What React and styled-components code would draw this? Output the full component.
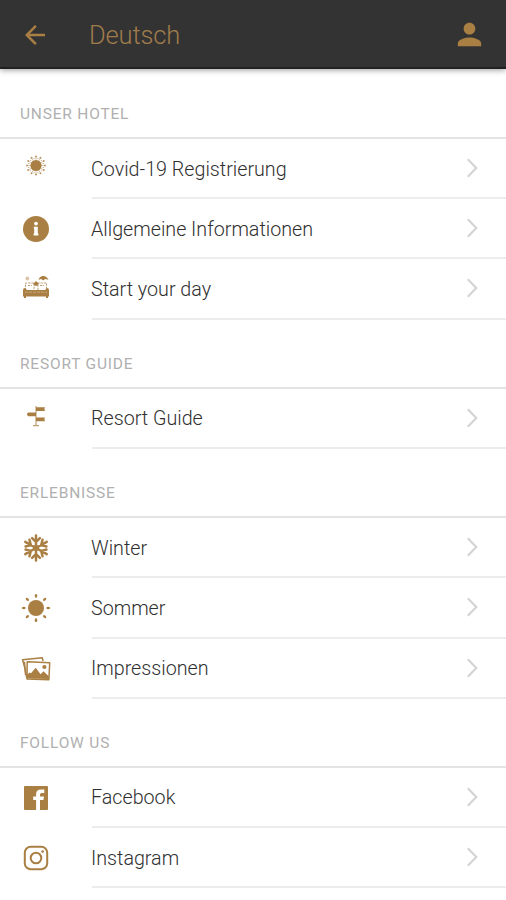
import React from "react";
import styled, { ThemeProvider, createGlobalStyle } from "styled-components";
import { MdArrowBack, MdPerson } from "react-icons/md";

const GlobalStyle = createGlobalStyle`
    * {
        box-sizing: border-box;
    }

    body {
        margin: 0;
        background: #fff;
        font-family: Roboto, "Liberation Sans", sans-serif;
        overflow: hidden;
    }
`;

const Screen = styled.div`
    width: 100%;
    height: 900px;
    overflow: hidden;
    background: #fff;
`;

const AppBar = styled.header`
    display: flex;
    align-items: center;
    height: 69px;
    padding: 2px 19px 0 20px;
    background: #333;
    border-bottom: 2px solid #212121;
    box-shadow: 0 1px 6px rgba(0, 0, 0, 0.4);
    color: ${({ theme }) => theme.gold};

    svg {
        display: block;
        flex: none;
    }
`;

const Title = styled.h1`
    flex: 1;
    margin: 1px 0 0 39px;
    font-size: 25.5px;
    font-weight: 300;
    line-height: 32px;
    letter-spacing: -0.15px;
    color: #a07c4b;
`;

const SectionTitle = styled.h2`
    display: flex;
    align-items: flex-end;
    height: ${({ $first }) => ($first ? 70 : 69.2)}px;
    margin: 0;
    padding: 0 20px 13px;
    border-bottom: 2px solid #e4e4e4;
    font-size: 15.5px;
    font-weight: 400;
    line-height: 20px;
    letter-spacing: 0.8px;
    color: #b0b0b0;
`;

const Row = styled.div`
    display: flex;
    height: 60.2px;
`;

const IconCell = styled.div`
    display: flex;
    flex: none;
    align-items: center;
    justify-content: center;
    width: 72px;
    margin-right: 19.5px;
    color: ${({ theme }) => theme.gold};

    svg {
        display: block;
    }
`;

const RowBody = styled.div`
    display: flex;
    flex: 1;
    align-items: center;
    justify-content: space-between;
    padding-right: 27px;
    border-bottom: 2px solid #ececec;
`;

const Label = styled.span`
    padding-top: 3px;
    margin-left: -0.5px;
    font-size: 19.7px;
    font-weight: 300;
    line-height: 26px;
    color: #303030;
    white-space: nowrap;
`;

const IconSvg = ({ children }) => (
    <svg width="30" height="30" viewBox="-15 -15 30 30" fill="currentColor">
        {children}
    </svg>
);

const steps = (count) => Array.from({ length: count }, (_, i) => (360 / count) * i);

const VirusIcon = () => (
    <IconSvg>
        <g transform="translate(0 -3.5)">
            <circle r="5.6" />
            {steps(12).map((a) => (
                <g key={a} transform={`rotate(${a})`} opacity="0.85">
                    <path d="M0-5V-9" stroke="currentColor" strokeWidth="0.5" />
                    <circle cy="-9" r="0.95" />
                </g>
            ))}
            {steps(12).map((a) => (
                <circle key={a} r="0.5" cy="-7.4" transform={`rotate(${a + 15})`} />
            ))}
        </g>
    </IconSvg>
);

const InfoIcon = () => (
    <IconSvg>
        <circle r="13" />
        <circle cy="-5.4" r="1.9" fill="#fff" />
        <path d="M-2.2-2.2H1.8V4.6H2.4V6.4H-2.4V4.6H-1.8V-.4H-2.2Z" fill="#fff" />
    </IconSvg>
);

const BedIcon = () => (
    <IconSvg>
        <g transform="translate(0 -2)">
            <circle cx="-8.6" cy="-8.5" r="1.9" opacity="0.45" />
            <path d="M2.5-7.3Q4-11 7-11Q10-11.5 12.5-7.3L9-8Q7-5.5 5.5-8Z" />
            <path
                d="M-10.5 3V-4H-2V3M2 3V-4H10.5V3M-8-1.5H-4M4-1.5H8"
                fill="none"
                stroke="currentColor"
                strokeWidth="1"
                strokeDasharray="2.2 1"
                opacity="0.75"
            />
            <path d="M0-6L2.8-3.2L1.3-1.2H-1.3L-2.8-3.2Z" />
            <path d="M-13 3Q-13 1-11 1L-9 3H9L11 1Q13 1 13 3V9.5H12V11H10V9.5H-10V11H-12V9.5H-13Z" />
            <path d="M-11 5.2H11" stroke="#fff" strokeWidth="0.6" strokeDasharray="3 1" opacity="0.5" />
        </g>
    </IconSvg>
);

const SignpostIcon = () => (
    <IconSvg>
        <g transform="translate(0 -2)">
            <path d="M-.6-11H.6V8H3V9.3H-3V8H-.6Z" opacity="0.75" />
            <path d="M0-9.8H9L8.4-8L9-6H0Z" />
            <path d="M0-4.6H-8L-9.2-2.7L-8-.8H0Z" />
            <path d="M0 .4H9L8.4 2.3L9 4.2H0Z" />
        </g>
    </IconSvg>
);

const SnowflakeIcon = () => (
    <IconSvg>
        <g fill="none" stroke="currentColor" strokeWidth="2.5" strokeLinecap="round">
            {steps(6).map((a) => (
                <path key={a} d="M0 0V-12.4M-3.9-9.8L0-6L3.9-9.8" transform={`rotate(${a})`} />
            ))}
        </g>
        <circle r="3" />
    </IconSvg>
);

const SunIcon = () => (
    <IconSvg>
        <circle r="8" />
        {steps(8).map((a) => (
            <ellipse key={a} cy="-12.2" rx="1.3" ry="1.9" transform={`rotate(${a})`} />
        ))}
    </IconSvg>
);

const PhotosIcon = () => (
    <IconSvg>
        <path
            d="M-9.2 9L-11-.5L-13.4-9.2L6.3-11.3L7-7.8"
            fill="none"
            stroke="currentColor"
            strokeWidth="1.5"
            strokeLinejoin="round"
        />
        <path d="M-11.5-7.2L-10.5 6" stroke="currentColor" strokeWidth="1.4" />
        <path
            d="M-8.8-7.2L13.7-6.2L12.9 10.7L-9 10Z"
            fill="#fff"
            stroke="currentColor"
            strokeWidth="1.5"
            strokeLinejoin="round"
        />
        <circle cx="8.4" cy="-2" r="2.1" />
        <path d="M-9 9.5V6L-6.5 3.5L-5 4.2L-.3-1.2L4.6 5.3L7.5 2.3L13 7.5V10Z" />
    </IconSvg>
);

const FacebookIcon = () => (
    <IconSvg>
        <path
            fillRule="evenodd"
            d="M-11-12H11Q12-12 12-11V11Q12 12 11 12H4V2.1H7.4L8-1.5H4V-3.4Q4-5 5.6-5H8.3V-8.4H5Q.1-8.4 .1-3.9V-1.5H-2.8V2.1H.1V12H-11Q-12 12-12 11V-11Q-12-12-11-12Z"
        />
    </IconSvg>
);

const InstagramIcon = () => (
    <IconSvg>
        <g fill="none" stroke="currentColor" strokeWidth="2">
            <rect x="-11.2" y="-11.2" width="22.4" height="22.4" rx="6" />
            <circle r="5.3" />
        </g>
        <circle cx="6.6" cy="-6.4" r="1.3" />
    </IconSvg>
);

const Chevron = () => (
    <svg width="14" height="22" viewBox="0 0 14 22" fill="none" stroke="#d4d4d4" strokeWidth="2.2">
        <path d="M2.8 2.2L11.3 11L2.8 19.8" />
    </svg>
);

const sections = [
    {
        title: "UNSER HOTEL",
        items: [
            { label: "Covid-19 Registrierung", icon: VirusIcon },
            { label: "Allgemeine Informationen", icon: InfoIcon },
            { label: "Start your day", icon: BedIcon },
        ],
    },
    {
        title: "RESORT GUIDE",
        items: [{ label: "Resort Guide", icon: SignpostIcon }],
    },
    {
        title: "ERLEBNISSE",
        items: [
            { label: "Winter", icon: SnowflakeIcon },
            { label: "Sommer", icon: SunIcon },
            { label: "Impressionen", icon: PhotosIcon },
        ],
    },
    {
        title: "FOLLOW US",
        items: [
            { label: "Facebook", icon: FacebookIcon },
            { label: "Instagram", icon: InstagramIcon },
        ],
    },
];

function App() {
    return (
        <ThemeProvider theme={{ gold: "#aa7f43" }}>
            <GlobalStyle />
            <Screen>
                <AppBar>
                    <MdArrowBack size={30} />
                    <Title>Deutsch</Title>
                    <MdPerson size={35} />
                </AppBar>
                {sections.map(({ title, items }, index) => (
                    <section key={title}>
                        <SectionTitle $first={index === 0}>{title}</SectionTitle>
                        {items.map(({ label, icon: Icon }) => (
                            <Row key={label}>
                                <IconCell>
                                    <Icon />
                                </IconCell>
                                <RowBody>
                                    <Label>{label}</Label>
                                    <Chevron />
                                </RowBody>
                            </Row>
                        ))}
                    </section>
                ))}
            </Screen>
        </ThemeProvider>
    );
}

export default App;
